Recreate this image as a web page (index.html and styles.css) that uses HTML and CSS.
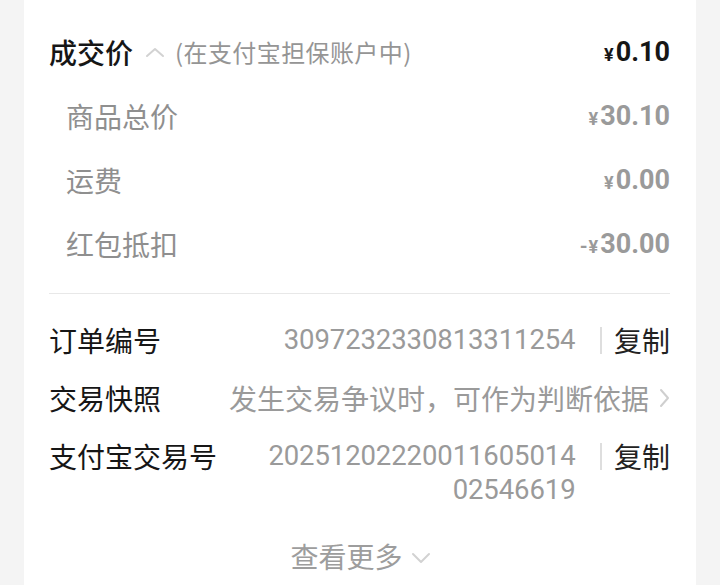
FILE: index.html
```html
<!DOCTYPE html>
<html lang="zh-CN">
<head>
<meta charset="utf-8">
<title>订单信息</title>
<link rel="stylesheet" href="styles.css">
</head>
<body>
<div class="card">
  <div class="price-row main">
    <div class="label-group">
      <span class="main-label">成交价</span>
      <svg class="chev-up" width="20" height="12" viewBox="0 0 20 12"><polyline points="2,10 10,3 18,10" fill="none" stroke="#d2d2d2" stroke-width="2" stroke-linecap="round" stroke-linejoin="round"/></svg>
      <span class="hint">(在支付宝担保账户中)</span>
    </div>
    <span class="amount dark"><span class="yen">¥</span>0.10</span>
  </div>
  <div class="price-row sub">
    <span class="sub-label">商品总价</span>
    <span class="amount"><span class="yen">¥</span>30.10</span>
  </div>
  <div class="price-row sub">
    <span class="sub-label">运费</span>
    <span class="amount"><span class="yen">¥</span>0.00</span>
  </div>
  <div class="price-row sub">
    <span class="sub-label">红包抵扣</span>
    <span class="amount"><span class="minus">-</span><span class="yen">¥</span>30.00</span>
  </div>
  <div class="divider"></div>
  <div class="info-row">
    <span class="info-label">订单编号</span>
    <span class="info-value num">3097232330813311254</span>
    <span class="sep"></span>
    <span class="copy">复制</span>
  </div>
  <div class="info-row">
    <span class="info-label">交易快照</span>
    <span class="info-value">发生交易争议时，可作为判断依据</span>
    <svg class="chev-right" width="12" height="20" viewBox="0 0 12 20"><polyline points="3,2 10,10 3,18" fill="none" stroke="#cfcfcf" stroke-width="2" stroke-linecap="round" stroke-linejoin="round"/></svg>
  </div>
  <div class="info-row">
    <span class="info-label">支付宝交易号</span>
    <span class="info-value num">20251202220011605014<br>02546619</span>
    <span class="sep"></span>
    <span class="copy">复制</span>
  </div>
  <div class="more">
    <span>查看更多</span>
    <svg class="chev-down" width="20" height="12" viewBox="0 0 20 12"><polyline points="2,2 10,10 18,2" fill="none" stroke="#d2d2d2" stroke-width="2" stroke-linecap="round" stroke-linejoin="round"/></svg>
  </div>
</div>
</body>
</html>
```
FILE: styles.css
```css
html, body {
  margin: 0;
  padding: 0;
  background: #f4f4f4;
  height: 100%;
}
body {
  font-family: "Noto Sans CJK SC", "Noto Sans", sans-serif;
  overflow: hidden;
}
.card {
  margin: 0 24px;
  background: #ffffff;
  min-height: 585px;
  box-sizing: border-box;
  padding: 20px 26px 0 25px;
}
.price-row {
  display: flex;
  align-items: center;
  justify-content: space-between;
  height: 64px;
}
.price-row.sub {
  padding-left: 17px;
}
.label-group {
  display: flex;
  align-items: center;
}
.main-label {
  font-size: 28px;
  font-weight: 500;
  color: #161616;
  line-height: 34px;
}
.chev-up {
  margin: 0 10px 0 12px;
}
.hint {
  font-size: 24px;
  color: #959595;
  line-height: 34px;
  letter-spacing: 0.4px;
}
.sub-label {
  font-size: 28px;
  color: #8f8f8f;
  line-height: 34px;
}
.amount {
  font-family: Roboto, "Noto Sans", sans-serif;
  font-weight: 700;
  font-size: 27px;
  color: #9a9a9a;
  line-height: 34px;
  padding-top: 3px;
}
.amount.dark {
  color: #161616;
}
.yen {
  font-size: 18px;
  margin-right: 2px;
}
.minus {
  font-size: 20px;
  margin-right: 1px;
}
.divider {
  height: 1px;
  background: #e8e8e8;
  margin: 17px 0 17px;
}
.info-row {
  display: flex;
  align-items: flex-start;
  padding: 12px 0;
  line-height: 34px;
  font-size: 28px;
}
.info-label {
  color: #161616;
  white-space: nowrap;
}
.info-value {
  flex: 1;
  text-align: right;
  color: #9a9a9a;
  margin-left: 40px;
}
.info-value.num {
  font-family: Roboto, "Noto Sans", sans-serif;
  font-size: 27.5px;
  letter-spacing: -0.1px;
}
.sep {
  width: 1.5px;
  height: 27px;
  background: #dedede;
  margin: 4px 12px 0 25px;
  flex: none;
}
.copy {
  color: #222222;
  white-space: nowrap;
}
.chev-right {
  margin: 7px 0 0 9px;
  flex: none;
}
.more {
  display: flex;
  justify-content: center;
  align-items: center;
  margin-top: 20px;
  font-size: 28px;
  line-height: 34px;
  color: #9d9d9d;
  padding-left: 2px;
}
.chev-down {
  margin-left: 8px;
  margin-top: 4px;
}
```
